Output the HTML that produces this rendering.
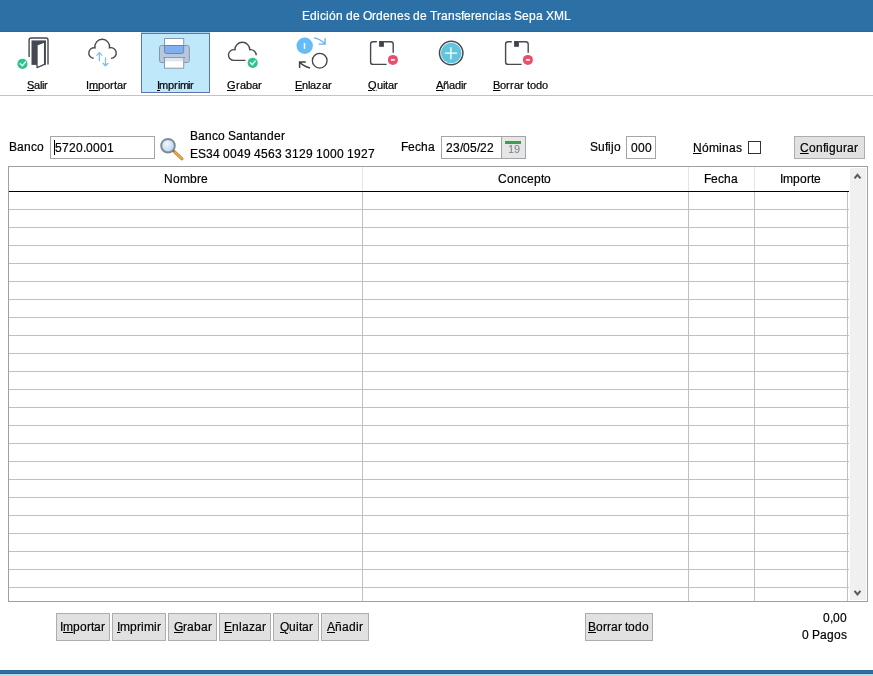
<!DOCTYPE html>
<html><head><meta charset="utf-8">
<style>
*{margin:0;padding:0;box-sizing:border-box}
html,body{width:873px;height:676px;overflow:hidden;background:#fff;font-family:"Liberation Sans",sans-serif;color:#000}
.a{position:absolute}
.tx{position:absolute;white-space:nowrap;line-height:1;height:14px;will-change:transform;-webkit-text-stroke:0.2px currentColor}
.tx b{display:inline-block;font-weight:normal;text-align:left;overflow:visible}
.tx b.u{text-decoration:underline;text-underline-offset:1px}
.inp{position:absolute;border:1px solid #a5a5a5;background:#fff}
.btn{position:absolute;border:1px solid #adadad;background:#e1e1e1}
</style></head><body>

<div class="a" style="left:0;top:0;width:873px;height:32px;background:#2c70a6"></div>
<div class="a" style="left:0;top:31px;width:873px;height:1px;background:#2a6898"></div>
<div class="tx " style="left:302px;top:10px;font-size:12px;color:#fff"><b style="width:8px">E</b><b style="width:7px">d</b><b style="width:3px">i</b><b style="width:6px">c</b><b style="width:3px">i</b><b style="width:7px">ó</b><b style="width:7px">n</b><b style="width:3px">&nbsp;</b><b style="width:7px">d</b><b style="width:7px">e</b><b style="width:3px">&nbsp;</b><b style="width:9px">O</b><b style="width:4px">r</b><b style="width:7px">d</b><b style="width:7px">e</b><b style="width:7px">n</b><b style="width:7px">e</b><b style="width:6px">s</b><b style="width:3px">&nbsp;</b><b style="width:7px">d</b><b style="width:7px">e</b><b style="width:3px">&nbsp;</b><b style="width:7px">T</b><b style="width:4px">r</b><b style="width:7px">a</b><b style="width:7px">n</b><b style="width:6px">s</b><b style="width:3px">f</b><b style="width:7px">e</b><b style="width:4px">r</b><b style="width:7px">e</b><b style="width:7px">n</b><b style="width:6px">c</b><b style="width:3px">i</b><b style="width:7px">a</b><b style="width:6px">s</b><b style="width:3px">&nbsp;</b><b style="width:8px">S</b><b style="width:7px">e</b><b style="width:7px">p</b><b style="width:7px">a</b><b style="width:3px">&nbsp;</b><b style="width:8px">X</b><b style="width:10px">M</b><b style="width:7px">L</b></div>
<div class="a" style="left:141px;top:32px;width:69px;height:1px;background:#a9d0f3"></div>
<div class="a" style="left:141px;top:33px;width:69px;height:60px;background:#c0e8fb;border:1px solid #5b74ab"></div>
<div class="a" style="left:0;top:95px;width:873px;height:1px;background:#c3c3c3"></div>
<div class="tx " style="left:27px;top:80px;font-size:11px"><b class="u" style="width:7px">S</b><b style="width:6px">a</b><b style="width:2px">l</b><b style="width:2px">i</b><b style="width:4px">r</b></div>
<div class="tx " style="left:86px;top:80px;font-size:11px"><b style="width:3px">I</b><b class="u" style="width:9px">m</b><b style="width:6px">p</b><b style="width:6px">o</b><b style="width:4px">r</b><b style="width:3px">t</b><b style="width:6px">a</b><b style="width:4px">r</b></div>
<div class="tx " style="left:157px;top:80px;font-size:11px"><b class="u" style="width:2px">I</b><b style="width:9px">m</b><b style="width:6px">p</b><b style="width:4px">r</b><b style="width:2px">i</b><b style="width:8px">m</b><b style="width:2px">i</b><b style="width:4px">r</b></div>
<div class="tx " style="left:227px;top:80px;font-size:11px"><b class="u" style="width:9px">G</b><b style="width:4px">r</b><b style="width:6px">a</b><b style="width:6px">b</b><b style="width:6px">a</b><b style="width:4px">r</b></div>
<div class="tx " style="left:295px;top:80px;font-size:11px"><b class="u" style="width:7px">E</b><b style="width:6px">n</b><b style="width:2px">l</b><b style="width:6px">a</b><b style="width:6px">z</b><b style="width:6px">a</b><b style="width:4px">r</b></div>
<div class="tx " style="left:368px;top:80px;font-size:11px"><b class="u" style="width:9px">Q</b><b style="width:6px">u</b><b style="width:2px">i</b><b style="width:3px">t</b><b style="width:6px">a</b><b style="width:4px">r</b></div>
<div class="tx " style="left:436px;top:80px;font-size:11px"><b class="u" style="width:7px">A</b><b style="width:6px">ñ</b><b style="width:6px">a</b><b style="width:6px">d</b><b style="width:2px">i</b><b style="width:4px">r</b></div>
<div class="tx " style="left:493px;top:80px;font-size:11px"><b class="u" style="width:7px">B</b><b style="width:6px">o</b><b style="width:4px">r</b><b style="width:4px">r</b><b style="width:6px">a</b><b style="width:4px">r</b><b style="width:3px">&nbsp;</b><b style="width:3px">t</b><b style="width:6px">o</b><b style="width:6px">d</b><b style="width:6px">o</b></div>
<svg class="a" style="left:0;top:0" width="873" height="96" viewBox="0 0 873 96">
<g fill="none" stroke="#444950" stroke-width="1.4" stroke-linecap="butt">
 <!-- door -->
 <path d="M29.1 56.9 V40 Q29.1 38 31.1 38 H46 Q48 38 48 40 V64.6"/>
</g>
<rect x="31.5" y="40.4" width="14.4" height="24.5" fill="#434852"/>
<path d="M37 45 L44.6 42 V64.4 L37 67.6 Z" fill="#fff" stroke="#434852" stroke-width="1.3" stroke-linejoin="round"/>
<circle cx="22.5" cy="63.8" r="5.1" fill="#2ec292"/>
<path d="M19.8 63.2 L22.4 65.7 L25.9 61.5" fill="none" stroke="#dffff4" stroke-width="1.5"/>

<!-- importar cloud -->
<path d="M93.6 58.3 A5.3 5.3 0 1 1 95.0 47.8 A7.3 7.3 0 1 1 109.4 47.8 A5.4 5.4 0 1 1 111 58.4" fill="none" stroke="#47494d" stroke-width="1.4"/>
<g fill="none" stroke="#80bcf0" stroke-width="1.25">
 <path d="M99.4 52.8 V61.2 M96.5 55.6 L99.4 52.6 L102.4 55.6"/>
 <path d="M105.5 57.4 V65.6 M102.7 63 L105.5 65.8 L108.4 63"/>
</g>

<!-- printer -->
<rect x="164.5" y="38.5" width="19.2" height="8" fill="#fff" stroke="#8799b0" stroke-width="1"/>
<rect x="159.5" y="45.5" width="29.8" height="17" rx="2" fill="#b8c8dc" stroke="#8096b0" stroke-width="1"/>
<path d="M164.5 45.5 H183.7 V51.5 Q183.7 53.5 181.7 53.5 H166.5 Q164.5 53.5 164.5 51.5 Z" fill="#80b0f0" stroke="#5f88c0" stroke-width="1"/>
<rect x="163.5" y="57" width="21.5" height="1.2" fill="#7a8ea8"/>
<rect x="164.5" y="57.8" width="19.2" height="10.4" fill="#fff" stroke="#8799b0" stroke-width="1"/>
<rect x="165" y="58.3" width="18.2" height="3" fill="#dfe5ee"/>

<!-- grabar cloud -->
<path d="M245.5 60.4 H234 A5.4 5.4 0 1 1 234.9 49.7 A7.45 7.45 0 1 1 249.8 49.7 A5.6 5.6 0 0 1 256.2 55.3" fill="none" stroke="#47494d" stroke-width="1.4"/>
<circle cx="252.7" cy="62.8" r="5.1" fill="#2ec292"/>
<path d="M250 62.2 L252.4 64.6 L255.6 60.6" fill="none" stroke="#dffff4" stroke-width="1.5"/>

<!-- enlazar -->
<circle cx="304.7" cy="45.8" r="8.2" fill="#66bcf6"/>
<path d="M304.5 43 V48.9" stroke="#fff" stroke-width="1.5"/>
<path d="M314.1 37.9 Q320.6 39.1 325.1 44.1 M318.6 44.1 H325.1 V38.2" fill="none" stroke="#6bb2ea" stroke-width="1.4"/>
<circle cx="319.7" cy="60.7" r="7.35" fill="none" stroke="#3f4246" stroke-width="1.3"/>
<path d="M310 68 Q303.5 66.5 299.6 62.1 M305.8 62.1 H299.6 V68" fill="none" stroke="#3f4246" stroke-width="1.5"/>

<!-- quitar & borrar -->
<g id="box">
<path d="M376.8 41.8 H373.1 Q370.6 41.8 370.6 44.3 V61.9 Q370.6 64.4 373.1 64.4 H386.6 M383.9 41.8 H390.7 Q393.2 41.8 393.2 44.3 V52.8" fill="none" stroke="#47494e" stroke-width="1.4"/>
<rect x="379.1" y="41" width="4.8" height="5.8" fill="#3f434b"/>
<circle cx="392.9" cy="59.9" r="5" fill="#e94f6b"/>
<path d="M390.9 59.9 H394.9" stroke="#fff" stroke-width="1.6"/>
</g>
<use href="#box" x="135"/>

<!-- anadir -->
<circle cx="451.2" cy="53" r="11.7" fill="#fff" stroke="#45484d" stroke-width="1.5"/>
<circle cx="451.2" cy="53" r="10.3" fill="#62c4dd"/>
<path d="M445 53.1 H457.1 M450.9 47.2 V59.3" stroke="#fff" stroke-width="1.35"/>
</svg>
<div class="tx " style="left:9px;top:141px;font-size:12px"><b style="width:8px">B</b><b style="width:7px">a</b><b style="width:7px">n</b><b style="width:6px">c</b><b style="width:7px">o</b></div>
<div class="inp" style="left:50px;top:136px;width:105px;height:23px"></div>
<div class="a" style="left:54px;top:140px;width:1px;height:15px;background:#000"></div>
<div class="tx " style="left:55px;top:142px;font-size:12px"><b style="width:7px">5</b><b style="width:7px">7</b><b style="width:7px">2</b><b style="width:7px">0</b><b style="width:3px">.</b><b style="width:7px">0</b><b style="width:7px">0</b><b style="width:7px">0</b><b style="width:7px">1</b></div>
<svg class="a" style="left:155px;top:130px" width="35" height="35" viewBox="155 130 35 35">
<defs><radialGradient id="lens" cx="0.4" cy="0.35" r="0.7"><stop offset="0" stop-color="#eef6ff"/><stop offset="1" stop-color="#b8d4f2"/></radialGradient></defs>
<line x1="173.8" y1="151.2" x2="182" y2="158.8" stroke="#b87a30" stroke-width="3" stroke-linecap="round"/>
<line x1="173.8" y1="151.2" x2="182" y2="158.8" stroke="#eea946" stroke-width="1.8" stroke-linecap="round"/>
<circle cx="173.3" cy="150.8" r="1.1" fill="#3d4258"/>
<circle cx="168" cy="145.7" r="6.8" fill="url(#lens)" stroke="#7f8b98" stroke-width="2"/>
</svg>
<div class="tx " style="left:190px;top:130px;font-size:12px"><b style="width:8px">B</b><b style="width:7px">a</b><b style="width:7px">n</b><b style="width:6px">c</b><b style="width:7px">o</b><b style="width:3px">&nbsp;</b><b style="width:8px">S</b><b style="width:7px">a</b><b style="width:7px">n</b><b style="width:3px">t</b><b style="width:7px">a</b><b style="width:7px">n</b><b style="width:7px">d</b><b style="width:7px">e</b><b style="width:4px">r</b></div>
<div class="tx " style="left:190px;top:148px;font-size:12px"><b style="width:8px">E</b><b style="width:8px">S</b><b style="width:7px">3</b><b style="width:7px">4</b><b style="width:3px">&nbsp;</b><b style="width:7px">0</b><b style="width:7px">0</b><b style="width:7px">4</b><b style="width:7px">9</b><b style="width:3px">&nbsp;</b><b style="width:7px">4</b><b style="width:7px">5</b><b style="width:7px">6</b><b style="width:7px">3</b><b style="width:3px">&nbsp;</b><b style="width:7px">3</b><b style="width:7px">1</b><b style="width:7px">2</b><b style="width:7px">9</b><b style="width:3px">&nbsp;</b><b style="width:7px">1</b><b style="width:7px">0</b><b style="width:7px">0</b><b style="width:7px">0</b><b style="width:3px">&nbsp;</b><b style="width:7px">1</b><b style="width:7px">9</b><b style="width:7px">2</b><b style="width:7px">7</b></div>
<div class="tx " style="left:401px;top:141px;font-size:12px"><b style="width:7px">F</b><b style="width:7px">e</b><b style="width:6px">c</b><b style="width:7px">h</b><b style="width:7px">a</b></div>
<div class="inp" style="left:441px;top:136px;width:85px;height:23px"></div>
<div class="a" style="left:501px;top:137px;width:1px;height:21px;background:#a5a5a5"></div>
<div class="a" style="left:502px;top:137px;width:23px;height:21px;background:#e6e6e6"></div>
<div class="a" style="left:505px;top:141px;width:16px;height:3px;background:#3c9f4c"></div>
<div class="tx " style="left:508px;top:144px;font-size:11px;color:#75808c;-webkit-text-stroke:0"><b style="width:6px">1</b><b style="width:6px">9</b></div>
<div class="tx " style="left:446px;top:142px;font-size:12px"><b style="width:7px">2</b><b style="width:7px">3</b><b style="width:3px">/</b><b style="width:7px">0</b><b style="width:7px">5</b><b style="width:3px">/</b><b style="width:7px">2</b><b style="width:7px">2</b></div>
<div class="tx " style="left:590px;top:141px;font-size:12px"><b style="width:8px">S</b><b style="width:7px">u</b><b style="width:3px">f</b><b style="width:3px">i</b><b style="width:3px">j</b><b style="width:7px">o</b></div>
<div class="inp" style="left:626px;top:136px;width:30px;height:23px"></div>
<div class="tx " style="left:631px;top:142px;font-size:12px"><b style="width:7px">0</b><b style="width:7px">0</b><b style="width:7px">0</b></div>
<div class="tx " style="left:693px;top:142px;font-size:12px"><b class="u" style="width:9px">N</b><b style="width:7px">ó</b><b style="width:10px">m</b><b style="width:3px">i</b><b style="width:7px">n</b><b style="width:7px">a</b><b style="width:6px">s</b></div>
<div class="a" style="left:748px;top:141px;width:13px;height:13px;border:1px solid #333;background:#fff"></div>
<div class="btn" style="left:794px;top:136px;width:71px;height:23px"></div>
<div class="tx " style="left:800px;top:142px;font-size:12px"><b class="u" style="width:9px">C</b><b style="width:7px">o</b><b style="width:7px">n</b><b style="width:3px">f</b><b style="width:3px">i</b><b style="width:7px">g</b><b style="width:7px">u</b><b style="width:4px">r</b><b style="width:7px">a</b><b style="width:4px">r</b></div>
<div class="a" style="left:8px;top:166px;width:860px;height:436px;border:1px solid #a0a0a0;background:#fff"></div>
<div class="a" style="left:362px;top:167px;width:1px;height:24px;background:#e5e5e5"></div>
<div class="a" style="left:688px;top:167px;width:1px;height:24px;background:#e5e5e5"></div>
<div class="a" style="left:754px;top:167px;width:1px;height:24px;background:#e5e5e5"></div>
<div class="a" style="left:9px;top:191px;width:840px;height:1px;background:#000"></div>
<div class="a" style="left:362px;top:192px;width:1px;height:409px;background:#c0c0c0"></div>
<div class="a" style="left:688px;top:192px;width:1px;height:409px;background:#c0c0c0"></div>
<div class="a" style="left:754px;top:192px;width:1px;height:409px;background:#c0c0c0"></div>
<div class="a" style="left:847px;top:192px;width:1px;height:409px;background:#c0c0c0"></div>
<div class="a" style="left:9px;top:209px;width:840px;height:1px;background:#c0c0c0"></div>
<div class="a" style="left:9px;top:227px;width:840px;height:1px;background:#c0c0c0"></div>
<div class="a" style="left:9px;top:245px;width:840px;height:1px;background:#c0c0c0"></div>
<div class="a" style="left:9px;top:263px;width:840px;height:1px;background:#c0c0c0"></div>
<div class="a" style="left:9px;top:281px;width:840px;height:1px;background:#c0c0c0"></div>
<div class="a" style="left:9px;top:299px;width:840px;height:1px;background:#c0c0c0"></div>
<div class="a" style="left:9px;top:317px;width:840px;height:1px;background:#c0c0c0"></div>
<div class="a" style="left:9px;top:335px;width:840px;height:1px;background:#c0c0c0"></div>
<div class="a" style="left:9px;top:353px;width:840px;height:1px;background:#c0c0c0"></div>
<div class="a" style="left:9px;top:371px;width:840px;height:1px;background:#c0c0c0"></div>
<div class="a" style="left:9px;top:389px;width:840px;height:1px;background:#c0c0c0"></div>
<div class="a" style="left:9px;top:407px;width:840px;height:1px;background:#c0c0c0"></div>
<div class="a" style="left:9px;top:425px;width:840px;height:1px;background:#c0c0c0"></div>
<div class="a" style="left:9px;top:443px;width:840px;height:1px;background:#c0c0c0"></div>
<div class="a" style="left:9px;top:461px;width:840px;height:1px;background:#c0c0c0"></div>
<div class="a" style="left:9px;top:479px;width:840px;height:1px;background:#c0c0c0"></div>
<div class="a" style="left:9px;top:497px;width:840px;height:1px;background:#c0c0c0"></div>
<div class="a" style="left:9px;top:515px;width:840px;height:1px;background:#c0c0c0"></div>
<div class="a" style="left:9px;top:533px;width:840px;height:1px;background:#c0c0c0"></div>
<div class="a" style="left:9px;top:551px;width:840px;height:1px;background:#c0c0c0"></div>
<div class="a" style="left:9px;top:569px;width:840px;height:1px;background:#c0c0c0"></div>
<div class="a" style="left:9px;top:587px;width:840px;height:1px;background:#c0c0c0"></div>
<div class="a" style="left:850px;top:168px;width:16px;height:432px;background:#f0f0f0"></div>
<svg class="a" style="left:848px;top:166px" width="19" height="436" viewBox="848 166 19 436">
<path d="M854.5 178.3 L857.5 174.8 L860.5 178.3" fill="none" stroke="#5a5a5a" stroke-width="2"/>
<path d="M854.5 590.8 L857.5 594.5 L860.5 590.8" fill="none" stroke="#5a5a5a" stroke-width="2"/>
</svg>
<div class="tx " style="left:164px;top:173px;font-size:12px"><b style="width:9px">N</b><b style="width:7px">o</b><b style="width:10px">m</b><b style="width:7px">b</b><b style="width:4px">r</b><b style="width:7px">e</b></div>
<div class="tx " style="left:498px;top:173px;font-size:12px"><b style="width:9px">C</b><b style="width:7px">o</b><b style="width:7px">n</b><b style="width:6px">c</b><b style="width:7px">e</b><b style="width:7px">p</b><b style="width:3px">t</b><b style="width:7px">o</b></div>
<div class="tx " style="left:704px;top:173px;font-size:12px"><b style="width:7px">F</b><b style="width:7px">e</b><b style="width:6px">c</b><b style="width:7px">h</b><b style="width:7px">a</b></div>
<div class="tx " style="left:780px;top:173px;font-size:12px"><b style="width:3px">I</b><b style="width:10px">m</b><b style="width:7px">p</b><b style="width:7px">o</b><b style="width:4px">r</b><b style="width:3px">t</b><b style="width:7px">e</b></div>
<div class="btn" style="left:56px;top:613px;width:54px;height:28px"></div>
<div class="tx " style="left:60px;top:621px;font-size:12px"><b style="width:3px">I</b><b class="u" style="width:10px">m</b><b style="width:7px">p</b><b style="width:7px">o</b><b style="width:4px">r</b><b style="width:3px">t</b><b style="width:7px">a</b><b style="width:4px">r</b></div>
<div class="btn" style="left:112px;top:613px;width:54px;height:28px"></div>
<div class="tx " style="left:117px;top:621px;font-size:12px"><b class="u" style="width:3px">I</b><b style="width:10px">m</b><b style="width:7px">p</b><b style="width:4px">r</b><b style="width:3px">i</b><b style="width:10px">m</b><b style="width:3px">i</b><b style="width:4px">r</b></div>
<div class="btn" style="left:168px;top:613px;width:49px;height:28px"></div>
<div class="tx " style="left:174px;top:621px;font-size:12px"><b class="u" style="width:9px">G</b><b style="width:4px">r</b><b style="width:7px">a</b><b style="width:7px">b</b><b style="width:7px">a</b><b style="width:4px">r</b></div>
<div class="btn" style="left:219px;top:613px;width:52px;height:28px"></div>
<div class="tx " style="left:224px;top:621px;font-size:12px"><b class="u" style="width:8px">E</b><b style="width:7px">n</b><b style="width:3px">l</b><b style="width:7px">a</b><b style="width:6px">z</b><b style="width:7px">a</b><b style="width:4px">r</b></div>
<div class="btn" style="left:273px;top:613px;width:46px;height:28px"></div>
<div class="tx " style="left:280px;top:621px;font-size:12px"><b class="u" style="width:9px">Q</b><b style="width:7px">u</b><b style="width:3px">i</b><b style="width:3px">t</b><b style="width:7px">a</b><b style="width:4px">r</b></div>
<div class="btn" style="left:321px;top:613px;width:48px;height:28px"></div>
<div class="tx " style="left:327px;top:621px;font-size:12px"><b class="u" style="width:8px">A</b><b style="width:7px">ñ</b><b style="width:7px">a</b><b style="width:7px">d</b><b style="width:3px">i</b><b style="width:4px">r</b></div>
<div class="btn" style="left:585px;top:613px;width:68px;height:28px"></div>
<div class="tx " style="left:588px;top:621px;font-size:12px"><b class="u" style="width:8px">B</b><b style="width:7px">o</b><b style="width:4px">r</b><b style="width:4px">r</b><b style="width:7px">a</b><b style="width:4px">r</b><b style="width:3px">&nbsp;</b><b style="width:3px">t</b><b style="width:7px">o</b><b style="width:7px">d</b><b style="width:7px">o</b></div>
<div class="tx " style="left:823px;top:612px;font-size:12px"><b style="width:7px">0</b><b style="width:3px">,</b><b style="width:7px">0</b><b style="width:7px">0</b></div>
<div class="tx " style="left:802px;top:629px;font-size:12px"><b style="width:7px">0</b><b style="width:3px">&nbsp;</b><b style="width:8px">P</b><b style="width:7px">a</b><b style="width:7px">g</b><b style="width:7px">o</b><b style="width:6px">s</b></div>
<div class="a" style="left:0;top:670px;width:873px;height:1px;background:#2a6696"></div>
<div class="a" style="left:0;top:671px;width:873px;height:2px;background:#2f70a3"></div>
<div class="a" style="left:0;top:673px;width:873px;height:1px;background:#405e78"></div>
<div class="a" style="left:0;top:674px;width:873px;height:2px;background:#bad8e2"></div>
</body></html>
